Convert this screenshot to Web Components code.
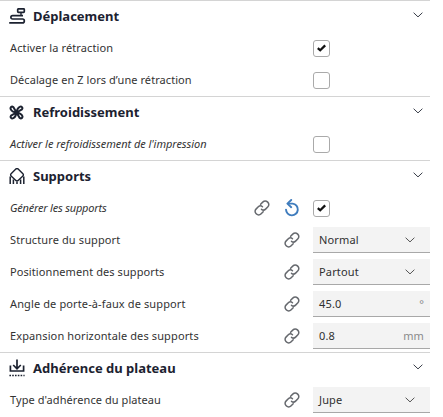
<!DOCTYPE html>
<html lang="fr"><head><meta charset="utf-8"><style>
html,body{margin:0;padding:0;background:#fff}
body{font-family:"Noto Sans","Open Sans",sans-serif;width:443px;height:417px;overflow:hidden}
</style></head><body>
<settings-panel>
<setting-section title="Déplacement" icon="move">
<setting-row label="Activer la rétraction"><check-box checked></check-box></setting-row>
<setting-row label="Décalage en Z lors d’une rétraction" style="--ls:.07px"><check-box></check-box></setting-row>
</setting-section>
<setting-section title="Refroidissement" icon="fan">
<setting-row label="Activer le refroidissement de l'impression" italic style="--ls:-.05px"><check-box></check-box></setting-row>
</setting-section>
<setting-section title="Supports" icon="support">
<setting-row label="Générer les supports" italic link reset style="--ls:-.2px"><check-box checked></check-box></setting-row>
<setting-row label="Structure du support" link><select-box value="Normal"></select-box></setting-row>
<setting-row label="Positionnement des supports" link style="--ls:.09px"><select-box value="Partout"></select-box></setting-row>
<setting-row label="Angle de porte-à-faux de support" link><num-box value="45.0" unit="°"></num-box></setting-row>
<setting-row label="Expansion horizontale des supports" link><num-box value="0.8" unit="mm"></num-box></setting-row>
</setting-section>
<setting-section title="Adhérence du plateau" icon="plate">
<setting-row label="Type d'adhérence du plateau" link style="--ls:.07px"><select-box value="Jupe"></select-box></setting-row>
</setting-section>
</settings-panel>
<script>
const CHEV='<svg width="10" height="6" viewBox="0 0 10 6" fill="none" stroke="#3a3f4a" stroke-width="1"><path d="M.6.7 5 4.9 9.4.7"/></svg>';
const LINK='<svg width="18" height="18" viewBox="0 0 18 18" fill="none" stroke="#66696e" stroke-width="1.5" stroke-linecap="round"><path d="M7.6 5.2 10 2.9a3.1 3.1 0 0 1 4.4 0l.5.5a3.1 3.1 0 0 1 0 4.4l-2.3 2.3a3.1 3.1 0 0 1-4.1.2"/><path d="M10.2 12.7 7.9 15a3.1 3.1 0 0 1-4.4 0l-.5-.5a3.1 3.1 0 0 1 0-4.4l2.3-2.3a3.1 3.1 0 0 1 4.2-.1"/></svg>';
const RESET='<svg width="16" height="18" viewBox="0 0 16 18" fill="none" stroke="#3f7cbd" stroke-width="1.9"><path d="M4.6 4.6h4a5.9 5.9 0 1 1-6.6 6" stroke-linecap="round"/><path d="M7.2 1 3.4 4.6l3.8 3.6" stroke-linecap="round" stroke-linejoin="round"/></svg>';
const ICONS={
move:'<svg width="17" height="16" viewBox="0 0 17 16" fill="none" stroke="#1c2230" stroke-width="1.7"><path d="M14 7.6H3.6c-2.3 0-2.3 3.4 0 3.4h10c2.3 0 2.3 3.9 0 3.9H.2"/><rect x="8.7" y=".8" width="6.6" height="3.6" rx=".8"/><path d="M12 4.4v3.2" stroke-width="1.4"/></svg>',
fan:'<svg width="15" height="15" viewBox="0 0 15 15" fill="none" stroke="#1c2230" stroke-width="2" stroke-linejoin="round"><path d="M7.5 7.5 4.3 2C2.6 .9 .9 2.5 1.8 4.3 2.4 5.6 4.6 7 7.5 7.5Z"/><path d="M7.5 7.5 13 4.3C14.1 2.6 12.5.9 10.7 1.8 9.4 2.4 8 4.6 7.5 7.5Z"/><path d="M7.5 7.5 10.7 13C12.4 14.1 14.1 12.5 13.2 10.7 12.6 9.4 10.4 8 7.5 7.5Z"/><path d="M7.5 7.5 2 10.7C.9 12.4 2.5 14.1 4.3 13.2 5.6 12.6 7 10.4 7.5 7.5Z"/></svg>',
support:'<svg width="16" height="16" viewBox="0 0 16 16" fill="none" stroke="#1c2230" stroke-width="1.4"><path d="M6.6 1.2a2 2 0 0 1 2.8 0l4.5 4.5a1.6 1.6 0 0 1 0 2.3L9.4 12.3a2 2 0 0 1-2.8 0L2.1 8a1.6 1.6 0 0 1 0-2.3Z" stroke-linejoin="round"/><path d="M1.2 8.6V16M4.4 11.4V16M8 13.8V16M11.6 11.4V16M14.8 8.6V16" stroke-width="1.5"/></svg>',
plate:'<svg width="16" height="18" viewBox="0 0 16 18" fill="none" stroke="#1c2230" stroke-width="1.7"><path d="M8 .5v9M4.2 6 8 9.8 11.8 6"/><path d="M1.4 6.5V12h13.2V6.5" stroke-width="1.7"/><path d="M.4 16.5h15.2" stroke-width="1.5" stroke-dasharray="1.6 1.2"/></svg>'
};
function def(name,css,html){customElements.define(name,class extends HTMLElement{
 connectedCallback(){ if(this.shadowRoot)return; const r=this.attachShadow({mode:'open'}); r.innerHTML='<style>'+css+'</style>'+html(this);}
});}
def('settings-panel',':host{display:block;width:430px}',()=>'<slot></slot>');
def('setting-section',`:host{display:block;border-top:1px solid #d4d4d4}
.h{height:31px;box-sizing:border-box;display:flex;align-items:center;padding:0 7px 1px 9px}
.i{width:24px;display:flex;align-items:center;height:18px}
.t{flex:1;font-size:13px;font-weight:700;color:#1c2230}
.c{display:flex;margin-top:-2px}`,e=>`<div class="h"><span class="i">${ICONS[e.getAttribute('icon')]}</span><span class="t">${e.getAttribute('title')}</span><span class="c">${CHEV}</span></div><slot></slot>`);
def('setting-row',`:host{display:flex;height:32px;align-items:center;padding-left:10px;font-size:11px;color:#333}
.l{flex:1;white-space:nowrap;letter-spacing:var(--ls,.12px);padding-bottom:2px}.l.it{font-style:italic}
.a{display:flex;align-items:center;justify-content:center}
.link{width:18px;margin-right:12px}
.reset{width:18px;margin-right:12px}
.ctl{width:117px;display:flex}`,e=>{
 const lk=e.hasAttribute('link'),rs=e.hasAttribute('reset');
 return `<span class="l${e.hasAttribute('italic')?' it':''}">${e.getAttribute('label')}</span>`+
 (lk?`<span class="a link">${LINK}</span>`:'')+(rs?`<span class="a reset">${RESET}</span>`:'')+
 `<span class="ctl"><slot></slot></span>`;});
def('check-box',`:host{display:flex;align-items:center;justify-content:center;width:17px;height:17px;box-sizing:border-box;border:1px solid #aaa;border-radius:3px;background:#fff}`,
 e=>e.hasAttribute('checked')?'<svg width="9" height="8" viewBox="0 0 9 8" fill="none" stroke="#111" stroke-width="2.3"><path d="M.8 4.2 3.2 6.3 8.2 1.4"/></svg>':'');
const fieldCss=`:host{display:flex;align-items:center;width:117px;height:26px;box-sizing:border-box;background:#f3f3f3;border-bottom:1px solid #a8a8a8;padding:0 6px 0 6px;font-size:11px;color:#303030;letter-spacing:.15px}
.v{flex:1}.u{color:#8a8a8a}.c{display:flex;margin-right:9px}`;
def('select-box',fieldCss,e=>`<span class="v">${e.getAttribute('value')}</span><span class="c">${CHEV.replace('#3a3f4a','#555')}</span>`);
def('num-box',fieldCss,e=>`<span class="v">${e.getAttribute('value')}</span><span class="u">${e.getAttribute('unit')}</span>`);
</script>
</body></html>
